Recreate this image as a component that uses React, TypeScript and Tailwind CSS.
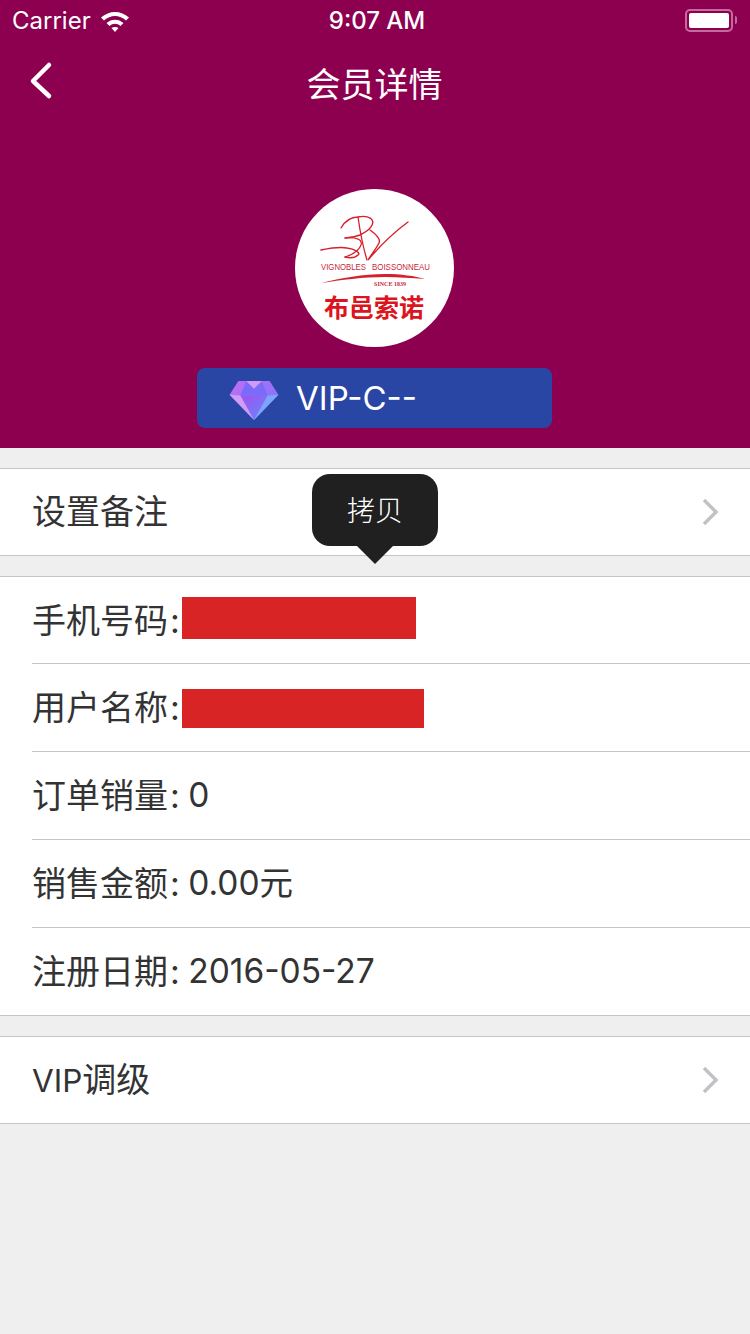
import React from 'react';

const FONT = 'font-["Inter","Noto_Sans_CJK_SC",sans-serif]';

const Logo = () => (
  <svg width="159" height="158" viewBox="0 0 159 158" className="block">
    <g fill="none" stroke="#d7202c" strokeLinecap="round">
      <path d="M46 39 C50 32 56 28 63 28 C68 27 72 27 75 29" strokeWidth="1.3" />
      <path d="M63 28 C65 42 68 58 72 71" strokeWidth="1.3" />
      <path d="M75 29 C80 32 79 39 65 46 C60 48 55 49 50 49" strokeWidth="1.4" />
      <path d="M50 49 C60 48 68 50 66 56 C64 62 56 66 50 68" strokeWidth="1.2" />
      <path d="M75 41 C82 46 86 50 84 54 C81 60 76 66 73 71 C84 58 98 44 113 33" strokeWidth="1.4" />
      <path d="M26 61 C36 59 46 58 52 59 C60 60 66 64 63 66 C60 69 54 69 50 68" strokeWidth="1.5" />
    </g>
    <path d="M26 94 C46 89 68 85 90 85 C106 85 120 87 130 90 C116 89 104 88 90 88 C68 88 46 91 26 94 Z" fill="#d7202c" />
    <text x="26" y="81" fontSize="9.5" fill="#c8283a" textLength="45" lengthAdjust="spacingAndGlyphs" fontFamily="Liberation Sans, sans-serif">VIGNOBLES</text>
    <text x="77" y="81" fontSize="9.5" fill="#c8283a" textLength="58" lengthAdjust="spacingAndGlyphs" fontFamily="Liberation Sans, sans-serif">BOISSONNEAU</text>
    <text x="95" y="97" fontSize="6" fontWeight="700" fill="#c8283a" textAnchor="middle" fontFamily="Liberation Serif, serif">SINCE 1839</text>
    <text x="79" y="128" fontSize="25" fontWeight="700" fill="#dc1420" textAnchor="middle" fontFamily="Noto Sans CJK SC, sans-serif">布邑索诺</text>
  </svg>
);

const Diamond = () => (
  <svg width="50" height="41" viewBox="0 0 50 42" className="block mt-1">
    <defs>
      <linearGradient id="top" x1="0" y1="0" x2="1" y2="1">
        <stop offset="0" stopColor="#c56cf5" />
        <stop offset="1" stopColor="#6c78fb" />
      </linearGradient>
      <linearGradient id="mid" x1="0" y1="0" x2="1" y2="1">
        <stop offset="0" stopColor="#a44ff0" />
        <stop offset="1" stopColor="#5f8cfb" />
      </linearGradient>
    </defs>
    <path d="M9 1 H41 L50 15 L25 41 L0 15 Z" fill="url(#top)" />
    <path d="M11 16 H39 L25 41 Z" fill="url(#mid)" />
    <path d="M0 15 L11 16 L25 41 Z" fill="#cf9cf8" />
    <path d="M50 15 L39 16 L25 41 Z" fill="#7da6fb" />
    <path d="M11 16 L17 1 L25 9 L33 1 L39 16 Z" fill="#7a6cf8" />
    <path d="M17 1 H33 L25 9 Z" fill="#cf9af8" />
  </svg>
);

const Chevron = () => (
  <svg width="16" height="28" viewBox="0 0 16 28" className="mr-[32px]">
    <path d="M2 2 L14 14 L2 26" fill="none" stroke="#c2c2c6" strokeWidth="3.400" />
  </svg>
);

const Row = ({ children, chevron, className }: { children: React.ReactNode; chevron?: boolean; className: string }) => (
  <div className="pl-8 bg-white">
    <div className={`flex items-center justify-between text-[34px] text-[#333333] ${className}`}>
      <div className="flex items-center">{children}</div>
      {chevron && <Chevron />}
    </div>
  </div>
);

const Section = ({ children }: { children: React.ReactNode }) => (
  <div className="border-y border-[#c4c4c6] bg-white mt-5">{children}</div>
);

const Colon = () => <span className="ml-[2px]">:</span>;

const Num = ({ children }: { children: React.ReactNode }) => (
  <span className="text-[33.500px] -ml-px">{children}</span>
);

export default function App() {
  return (
    <div className={`relative w-[750px] h-[1334px] bg-[#efefef] overflow-hidden ${FONT}`}>
      <header className="h-[448px] bg-[#8d0050] text-white">
        <div className="h-10 pl-3 pr-[13px] pt-0.5 flex items-center justify-between relative">
          <div className="flex items-center gap-[9px]">
            <span className="text-[24px]">Carrier</span>
            <svg width="30" height="22" viewBox="0 0 30 22">
              <path d="M1 7.500 C9 0 21 0 29 7.500 L26 10.500 C19.500 4.500 10.500 4.500 4 10.500 Z" fill="white" />
              <path d="M6.500 13 C11.500 8.500 18.500 8.500 23.500 13 L20.500 16 C17 13 13 13 9.500 16 Z" fill="white" />
              <path d="M11.500 18 C13.500 16.500 16.500 16.500 18.500 18 L15 22 Z" fill="white" />
            </svg>
          </div>
          <span className="absolute left-[4px] right-0 text-center text-[24px] font-medium">9:07 AM</span>
          <div className="flex items-center gap-0.5 -mt-0.5">
            <div className="w-[48px] h-[23px] rounded-[5px] border-2 border-[#c56a9c] p-[2px]">
              <div className="w-full h-full rounded-[2px] bg-white" />
            </div>
            <div className="w-[2px] h-2 bg-[#c56a9c] rounded-r" />
          </div>
        </div>
        <div className="h-[88px] flex items-center justify-center relative">
          <svg width="26" height="40" viewBox="0 0 26 40" className="absolute left-[27px] top-[20px]">
            <path d="M22 5 L6 21 L22 36" fill="none" stroke="white" strokeWidth="4.500" strokeLinecap="round" strokeLinejoin="round" />
          </svg>
          <h1 className="text-[34px] font-normal -ml-px">会员详情</h1>
        </div>
        <div className="flex flex-col items-center pt-[61px]">
          <div className="w-[159px] h-[158px] rounded-full bg-white overflow-hidden -ml-px">
            <Logo />
          </div>
          <div className="mt-[21px] w-[355px] h-[60px] rounded-lg bg-[#2a46a5] flex items-center pl-[32px] -ml-px">
            <Diamond />
            <span className="ml-[17px] pt-px text-[33px]">VIP-C--</span>
          </div>
        </div>
      </header>

      <Section>
        <Row chevron className="h-[86px]"><span className="-mt-0.5">设置备注</span></Row>
      </Section>

      <Section>
        <Row className="h-[87px] border-b border-[#c4c4c6]">
          手机号码<Colon />
          <div className="ml-0.5 -mt-1 w-[234px] h-[42px] bg-[#d92425]" />
        </Row>
        <Row className="h-[88px] border-b border-[#c4c4c6]">
          用户名称<Colon />
          <div className="ml-0.5 mt-0.5 w-[242px] h-[39px] bg-[#d92425]" />
        </Row>
        <Row className="h-[88px] border-b border-[#c4c4c6]">订单销量<Colon /><Num>&nbsp;0</Num></Row>
        <Row className="h-[88px] border-b border-[#c4c4c6]">销售金额<Colon /><Num>&nbsp;0.00元</Num></Row>
        <Row className="h-[87px]">注册日期<Colon /><Num>&nbsp;2016-05-27</Num></Row>
      </Section>

      <Section>
        <Row chevron className="h-[86px]"><span className="-mt-0.5"><span className="text-[31.500px]">VIP</span>调级</span></Row>
      </Section>

      {/* copy tooltip */}
      <div className="absolute left-[312px] top-[474px] w-[126px] h-[72px] pt-0.5 rounded-[18px] bg-[#202020] flex items-center justify-center text-[28px] font-light text-white">
        拷贝
        <div className="absolute left-[45px] top-[72px] w-0 h-0 border-x-[18px] border-x-transparent border-t-[18px] border-t-[#202020]" />
      </div>
    </div>
  );
}
